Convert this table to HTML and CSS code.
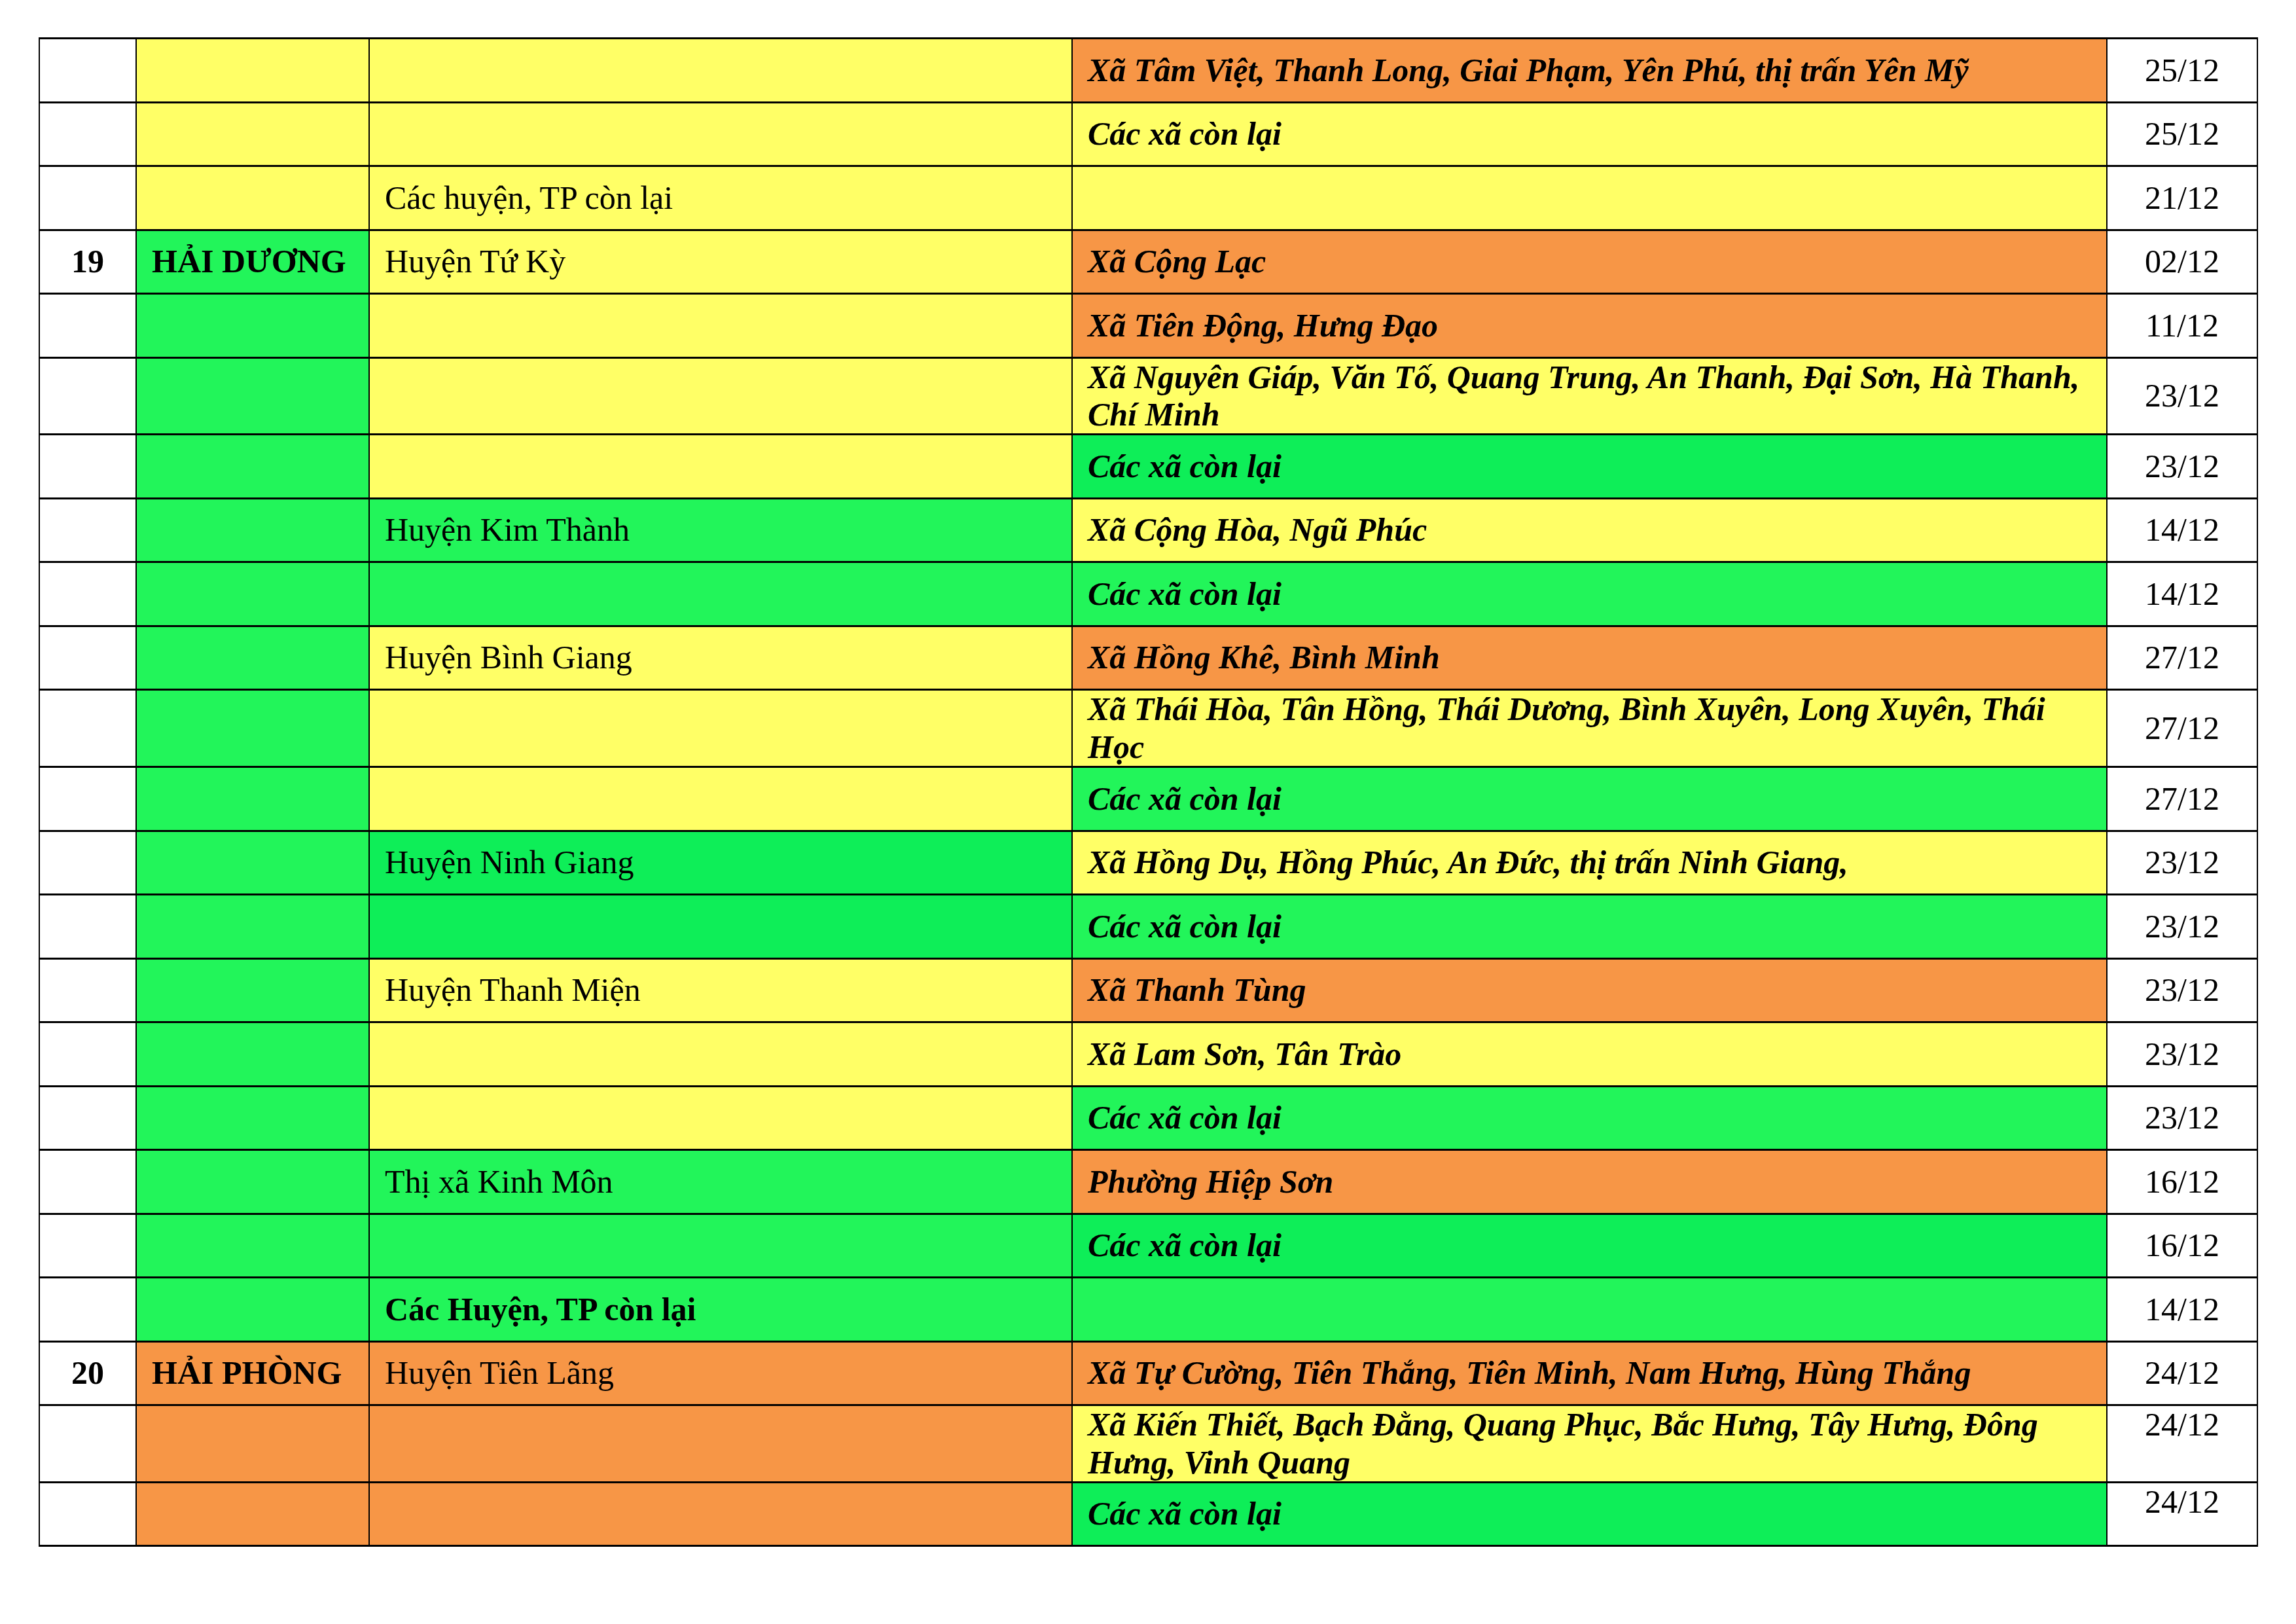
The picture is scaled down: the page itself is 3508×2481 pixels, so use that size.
FILE: index.html
```html
<!DOCTYPE html>
<html lang="vi">
<head>
<meta charset="utf-8">
<title>Lịch</title>
<link rel="stylesheet" href="styles.css">
</head>
<body>
<div class="page">
<table class="sched">
<colgroup>
<col class="c-no"><col class="c-prov"><col class="c-dist"><col class="c-xa"><col class="c-date">
</colgroup>
<tbody>
<tr><td class="no"></td><td class="y"></td><td class="y"></td><td class="o xa">Xã Tâm Việt, Thanh Long, Giai Phạm, Yên Phú, thị trấn Yên Mỹ</td><td class="date">25/12</td></tr>
<tr><td class="no"></td><td class="y"></td><td class="y"></td><td class="y xa">Các xã còn lại</td><td class="date">25/12</td></tr>
<tr><td class="no"></td><td class="y"></td><td class="y">Các huyện, TP còn lại</td><td class="y xa"></td><td class="date">21/12</td></tr>
<tr><td class="no">19</td><td class="g prov">HẢI DƯƠNG</td><td class="y">Huyện Tứ Kỳ</td><td class="o xa">Xã Cộng Lạc</td><td class="date">02/12</td></tr>
<tr><td class="no"></td><td class="g"></td><td class="y"></td><td class="o xa">Xã Tiên Động, Hưng Đạo</td><td class="date">11/12</td></tr>
<tr><td class="no"></td><td class="g"></td><td class="y"></td><td class="y xa">Xã Nguyên Giáp, Văn Tố, Quang Trung, An Thanh, Đại Sơn, Hà Thanh, Chí Minh</td><td class="date">23/12</td></tr>
<tr><td class="no"></td><td class="g"></td><td class="y"></td><td class="g2 xa">Các xã còn lại</td><td class="date">23/12</td></tr>
<tr><td class="no"></td><td class="g"></td><td class="g">Huyện Kim Thành</td><td class="y xa">Xã Cộng Hòa, Ngũ Phúc</td><td class="date">14/12</td></tr>
<tr><td class="no"></td><td class="g"></td><td class="g"></td><td class="g xa">Các xã còn lại</td><td class="date">14/12</td></tr>
<tr><td class="no"></td><td class="g"></td><td class="y">Huyện Bình Giang</td><td class="o xa">Xã Hồng Khê, Bình Minh</td><td class="date">27/12</td></tr>
<tr><td class="no"></td><td class="g"></td><td class="y"></td><td class="y xa">Xã Thái Hòa, Tân Hồng, Thái Dương, Bình Xuyên, Long Xuyên, Thái Học</td><td class="date">27/12</td></tr>
<tr><td class="no"></td><td class="g"></td><td class="y"></td><td class="g xa">Các xã còn lại</td><td class="date">27/12</td></tr>
<tr><td class="no"></td><td class="g"></td><td class="g2">Huyện Ninh Giang</td><td class="y xa">Xã Hồng Dụ, Hồng Phúc, An Đức, thị trấn Ninh Giang,</td><td class="date">23/12</td></tr>
<tr><td class="no"></td><td class="g"></td><td class="g2"></td><td class="g xa">Các xã còn lại</td><td class="date">23/12</td></tr>
<tr><td class="no"></td><td class="g"></td><td class="y">Huyện Thanh Miện</td><td class="o xa">Xã Thanh Tùng</td><td class="date">23/12</td></tr>
<tr><td class="no"></td><td class="g"></td><td class="y"></td><td class="y xa">Xã Lam Sơn, Tân Trào</td><td class="date">23/12</td></tr>
<tr><td class="no"></td><td class="g"></td><td class="y"></td><td class="g xa">Các xã còn lại</td><td class="date">23/12</td></tr>
<tr><td class="no"></td><td class="g"></td><td class="g">Thị xã Kinh Môn</td><td class="o xa">Phường Hiệp Sơn</td><td class="date">16/12</td></tr>
<tr><td class="no"></td><td class="g"></td><td class="g"></td><td class="g2 xa">Các xã còn lại</td><td class="date">16/12</td></tr>
<tr><td class="no"></td><td class="g"></td><td class="g strong">Các Huyện, TP còn lại</td><td class="g xa"></td><td class="date">14/12</td></tr>
<tr><td class="no">20</td><td class="o prov">HẢI PHÒNG</td><td class="o">Huyện Tiên Lãng</td><td class="o xa">Xã Tự Cường, Tiên Thắng, Tiên Minh, Nam Hưng, Hùng Thắng</td><td class="date">24/12</td></tr>
<tr><td class="no"></td><td class="o"></td><td class="o"></td><td class="y xa">Xã Kiến Thiết, Bạch Đằng, Quang Phục, Bắc Hưng, Tây Hưng, Đông Hưng, Vinh Quang</td><td class="date top">24/12</td></tr>
<tr><td class="no"></td><td class="o"></td><td class="o"></td><td class="g2 xa">Các xã còn lại</td><td class="date top">24/12</td></tr>
</tbody>
</table>
</div>
</body>
</html>
```

FILE: styles.css
```css
html, body {
  margin: 0;
  padding: 0;
  background: #ffffff;
}

body {
  font-family: "Liberation Serif", "Times New Roman", serif;
  font-size: 50px;
  color: #000000;
}

.page {
  padding: 57px 0 0 59px;
}

.sched {
  border-collapse: collapse;
  table-layout: fixed;
  width: 3389px;
}

.c-no { width: 148px; }
.c-prov { width: 356px; }
.c-dist { width: 1074px; }
.c-xa { width: 1581px; }
.c-date { width: 230px; }

.sched tr {
  height: 97.5px;
}

.sched td {
  border-top: 3px solid #000;
  border-bottom: 3px solid #000;
  border-left: 2px solid #000;
  border-right: 2px solid #000;
  padding: 0 23px;
  line-height: 57.4px;
  vertical-align: middle;
  text-align: left;
}

.no {
  text-align: center !important;
  font-weight: bold;
  background: #ffffff;
}

.date {
  text-align: center !important;
  background: #ffffff;
}

.date.top {
  vertical-align: top !important;
}

.prov {
  font-weight: bold;
}

.strong {
  font-weight: bold;
}

.xa {
  font-weight: bold;
  font-style: italic;
}

.y { background: #ffff66; }
.o { background: #f79646; }
.g { background: #22f55a; }
.g2 { background: #0eee58; }
```
